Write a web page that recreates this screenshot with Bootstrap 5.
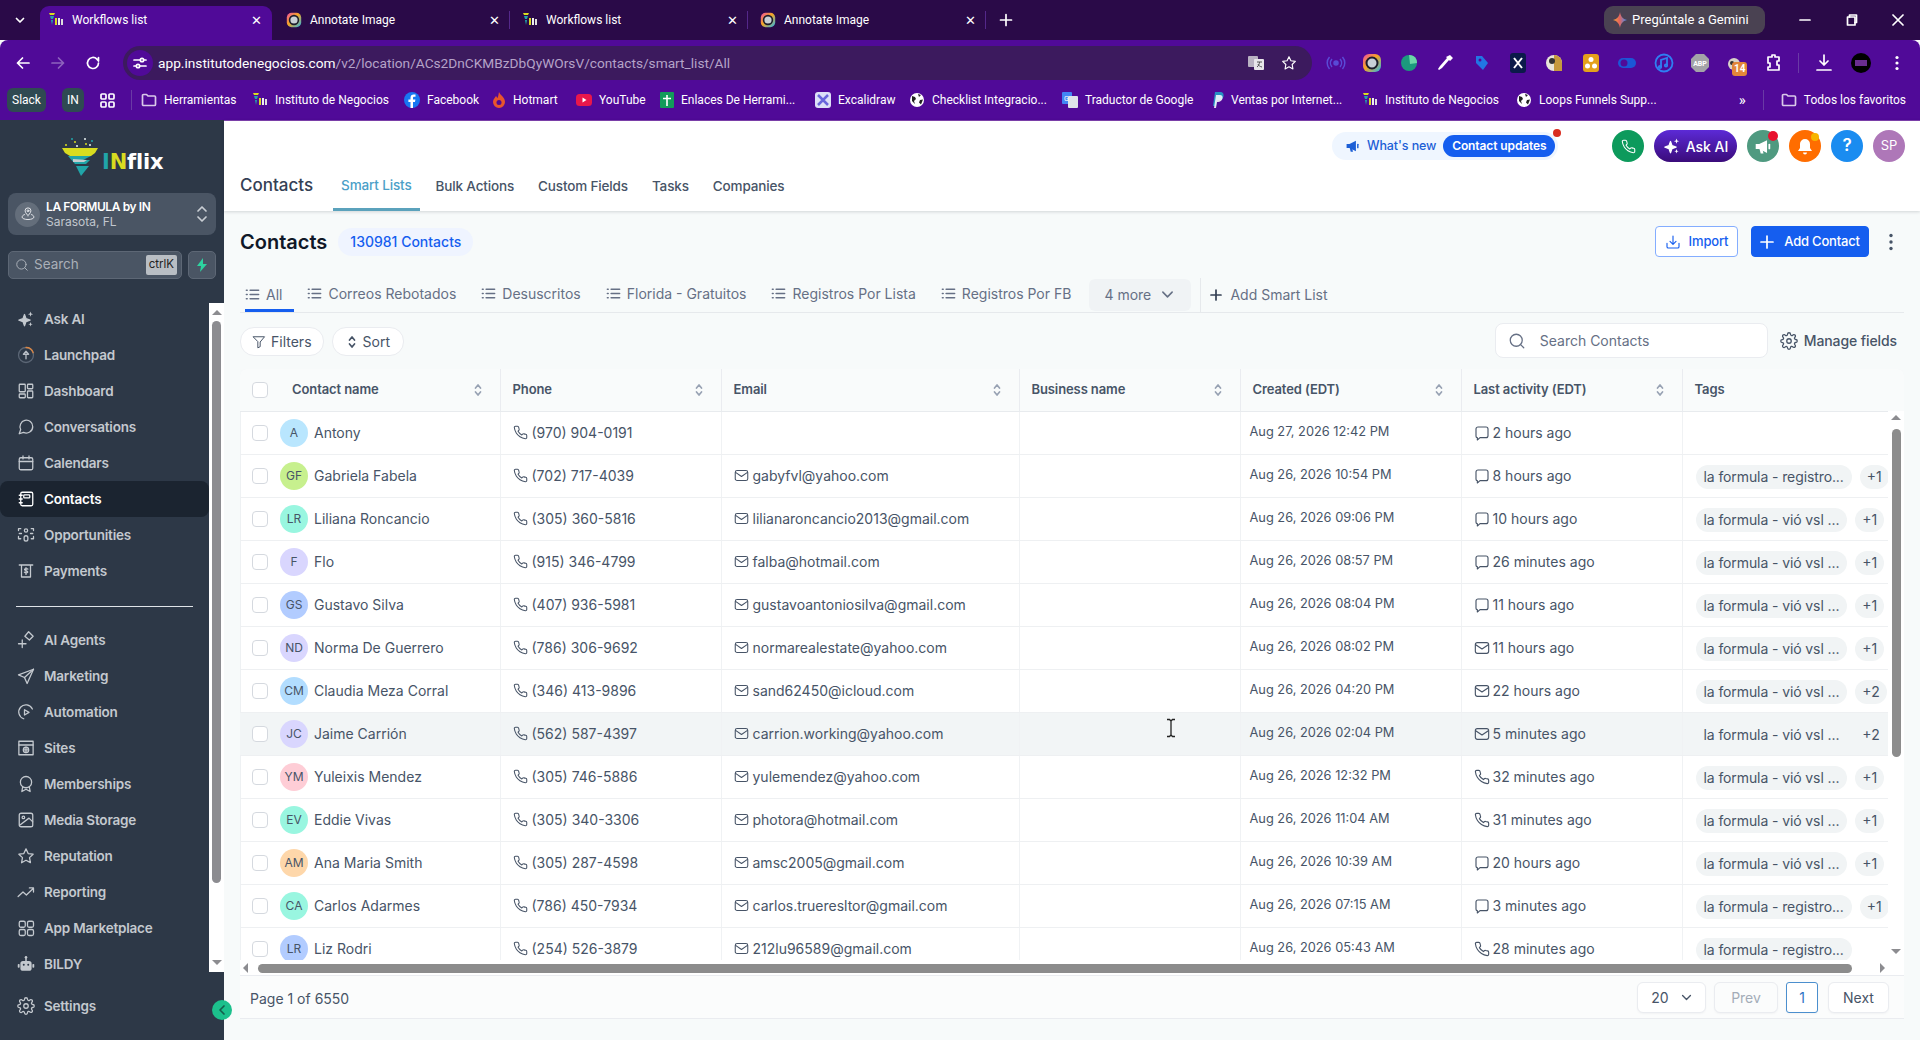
<!DOCTYPE html>
<html lang="en">
<head>
  <meta charset="UTF-8" />
  <meta name="viewport" content="width=device-width, initial-scale=1" />
  <title>Contacts</title>
  <link href="https://cdn.jsdelivr.net/npm/bootstrap@5.3.2/dist/css/bootstrap.min.css" rel="stylesheet" />
  <style>
    html, body { height: 100%; overflow: hidden; }
    body { font-family: Inter, "Liberation Sans", sans-serif; background: #f7fafa; color: #475467; }
    svg.ico { fill: none; stroke: currentColor; stroke-width: 1.7; stroke-linecap: round; stroke-linejoin: round; flex: none; display: block; }
    svg.solid { fill: currentColor; stroke: none; }

    /* browser chrome */
    .chrome { font-family: Roboto, "Liberation Sans", sans-serif; color: #fff; flex: none; }
    .tab-strip { height: 40px; background: #2a0a48; padding-left: 40px; position: relative; }
    .strip-arrow { position: absolute; left: 13px; top: 13px; }
    .br-tab { width: 238px; height: 34px; margin-top: 6px; padding: 0 10px 6px 8px; font-size: 12px; gap: 8px; position: relative; flex: none; }
    .br-tab.on { width: 232px; background: #500a98; border-radius: 9px 9px 0 0; }
    .br-tab .tclose { margin-left: auto; font-size: 13px; line-height: 1; }
    .br-tab .tsep { position: absolute; right: 0; top: 5px; height: 18px; width: 1px; background: #54288a; }
    .new-tab { margin-left: 13px; }
    .gemini { position: absolute; left: 1604px; top: 6px; width: 161px; height: 28px; background: #4a4252; border-radius: 9px; font-size: 13px; padding-left: 9px; gap: 5px; }
    .win-ctl { position: absolute; top: 12px; right: 0; width: 145px; height: 16px; }
    .toolbar { height: 45px; background: #500a98; border-radius: 8px 8px 0 0; padding: 6px 0 5px 0; }
    .nav-btns { width: 123px; flex: none; padding-left: 15px; gap: 19px; }
    .omnibox { width: 1189px; height: 34px; background: #3c1a5e; border-radius: 17px; padding: 0 15px 0 4px; font-size: 13.7px; flex: none; }
    .site-ico { width: 26px; height: 26px; border-radius: 50%; background: #500a98; margin-right: 5px; }
    .url-rest { color: #b5a3c8; }
    .ext-row { margin-left: 14px; gap: 16.4px; flex: none; }
    .ext-box { width: 20px; height: 20px; flex: none; position: relative; }
    .ext-count { position: absolute; left: 6px; top: 9px; background: #e2863a; color: #fff; font-size: 10px; font-weight: 700; line-height: 14px; width: 15px; text-align: center; border-radius: 3px; }
    .bookmarks { height: 35px; background: #500a98; padding: 0 0 5px 7px; font-size: 12px; position: relative; }
    .bm-pill { height: 24px; background: #2f4a52; border-radius: 6px; padding: 0 5px; font-size: 12px; }
    .bm-sep { width: 1px; height: 20px; background: #6a3aa5; }
    .bm-item { gap: 7px; white-space: nowrap; flex: none; }
    .bm-right { position: absolute; right: 14px; top: 3px; height: 24px; gap: 17px; }

    /* sidebar */
    .side-bar { width: 224px; flex: none; background: #2d3847; position: relative; color: #c9ced4; }
    .logo-wrap { height: 73px; padding: 17px 0 0 62px; }
    .logo-text { font-family: "DejaVu Sans", sans-serif; font-weight: 700; font-size: 21px; line-height: 1; margin: 15px 0 0 4px; letter-spacing: -.2px; color: #fff; }
    .loc-switch { margin: 0 8px; height: 42px; background: #4a5564; border-radius: 8px; padding: 0 8px 0 7px; gap: 6px; }
    .loc-ico { width: 25px; height: 25px; border-radius: 50%; background: #646e7b; color: #e5e7eb; }
    .loc-name { font-size: 12px; font-weight: 600; color: #fff; line-height: 15px; letter-spacing: -.4px; }
    .loc-city { font-size: 12px; color: #c2c7ce; line-height: 15px; }
    .side-search { margin: 16px 8px 0; gap: 6px; height: 28px; }
    .search-in { flex: 1; background: #4a5564; border: 1px solid #5d6775; border-radius: 5px; padding: 0 4px 0 6px; font-size: 13.5px; color: #aab0b8; gap: 5px; }
    .search-in .s-word { padding-bottom: 2px; }
    .search-in kbd { margin-left: auto; background: #b9bec4; color: #222; font-family: Inter, sans-serif; font-size: 11.5px; padding: 1px 3px; border-radius: 2px; box-shadow: none; }
    .bolt-btn { width: 28px; background: #4a5564; border: 1px solid #5d6775; border-radius: 5px; color: #2dd4a0; }
    .side-nav { margin-top: 22px; width: 209px; }
    .side-item { height: 36px; padding-left: 17px; gap: 9px; font-size: 13.5px; font-weight: 600; color: #c4c9cf; letter-spacing: -.2px; border-radius: 8px; }
    .side-item.on { background: #1b2430; color: #fff; }
    .side-rule { height: 1px; background: #dfe3e8; margin: 17px 16px 15px; }
    .side-track { position: absolute; left: 209px; top: 183px; width: 15px; height: 669px; background: #fff; }
    .side-thumb { position: absolute; left: 3px; top: 18px; width: 9px; height: 562px; background: #8c8c90; border-radius: 5px; }
    .arrow-up { width: 0; height: 0; border: 5px solid transparent; border-top: 0; border-bottom: 5px solid #8c8c90; position: absolute; }
    .arrow-dn { width: 0; height: 0; border: 5px solid transparent; border-bottom: 0; border-top: 5px solid #8c8c90; position: absolute; }
    .arrow-lf { width: 0; height: 0; border: 5px solid transparent; border-left: 0; border-right: 5px solid #8c8c90; position: absolute; }
    .arrow-rt { width: 0; height: 0; border: 5px solid transparent; border-right: 0; border-left: 5px solid #8c8c90; position: absolute; }
    .side-settings { position: absolute; left: 0; top: 868px; }
    .collapse-btn { position: absolute; left: 212px; top: 880px; width: 20px; height: 20px; border-radius: 50%; background: #1cc08c; color: #155e4b; z-index: 5; }

    /* page header */
    .page-col { flex: 1; min-width: 0; }
    .top-head { height: 91px; background: #fff; border-top: 1px solid #7a3fa8; box-shadow: 0 1px 3px rgba(16,24,40,.16); position: relative; padding-left: 16px; }
    .top-title { font-size: 17px; font-weight: 500; color: #344054; line-height: 22px; margin-top: 53px; margin-right: 20px; }
    .head-tabs { position: absolute; left: 16px; top: 0; height: 89px; }
    .head-tab { font-size: 13.5px; font-weight: 500; color: #475467; margin-top: 54px; height: 36px; padding: 1px 12px 0; letter-spacing: -.15px; flex: none; line-height: 20px; }
    .head-tab.on { color: #4b9fc8; border-bottom: 3px solid #5ba2bc; padding-top: 0; padding-left: 8px; padding-right: 8px; margin-right: 4px; }
    .head-right { position: absolute; right: 15px; top: 9px; height: 32px; gap: 10px; }
    .new-pill { width: 226px; height: 28px; background: #eff6ff; border-radius: 14px; margin-right: 44px; padding: 0 3px 0 14px; gap: 7px; font-size: 12.5px; font-weight: 500; color: #1d5fd6; position: relative; letter-spacing: -.1px; white-space: nowrap; flex: none; }
    .new-inner { margin-left: auto; width: 112px; height: 22px; background: #155eef; color: #fff; border-radius: 11px; font-size: 12px; font-weight: 600; text-align: center; line-height: 22px; flex: none; }
    .new-dot { position: absolute; right: -3px; top: -3px; width: 8px; height: 8px; border-radius: 50%; background: #d92d20; }
    .round-btn { width: 32px; height: 32px; border-radius: 50%; color: #fff; position: relative; font-weight: 600; font-size: 14px; flex: none; }
    .ai-btn { width: 83px; height: 32px; border-radius: 16px; background: linear-gradient(180deg,#5c2ad6,#3a0b7a); color: #fff; font-size: 14px; font-weight: 500; gap: 5px; }

    /* contact area */
    .content-wrap { padding: 15px 16px 0; }
    .title-row { height: 31px; }
    .page-title { font-size: 20px; font-weight: 600; color: #101828; line-height: 28px; margin: 0; }
    .count-badge { height: 28px; line-height: 28px; padding: 0 12px; margin-left: 11px; background: #eff4ff; color: #155eef; font-size: 14px; font-weight: 500; border-radius: 14px; }
    .btn-import { width: 83px; height: 31px; background: #fff; border: 1px solid #84adff; color: #155eef; font-size: 13px; font-weight: 500; border-radius: 4px; gap: 8px; padding: 1px 0 0; letter-spacing: -.15px; }
    .btn-add { width: 118px; height: 31px; background: #155eef; border: 1px solid #155eef; color: #fff; font-size: 13px; font-weight: 500; border-radius: 4px; gap: 10px; padding: 1px 0 0; margin-left: 13px; letter-spacing: -.2px; }
    .kebab { color: #475467; margin: 0 11px 0 20px; }
    .list-tabs { height: 36px; margin: 20px 0 0; border-bottom: 1px solid #e6e9ec; padding-left: 5px; position: relative; }
    .list-tab { font-size: 14px; color: #667085; height: 36px; gap: 6px; margin-right: 25px; padding-bottom: 2px; flex: none; }
    .list-tab.on { border-bottom: 3px solid #155eef; height: 35px; padding: 2px 12px 0 0; margin-right: 13px; color: #667085; }
    .more-box { width: 102px; height: 32px; background: #f0f3f5; border-radius: 6px; margin: 0 9px 0 -7px; font-size: 14px; color: #667085; padding-left: 15px; gap: 10px; flex: none; }
    .add-list { border-left: 1px solid #e6e9ec; height: 34px; padding-left: 9px; gap: 8px; font-size: 14px; color: #667085; }
    .tool-row { height: 35px; margin-top: 10px; }
    .pill-btn { height: 29px; background: #fff; border: 1px solid #eaecf0; border-radius: 14px; padding: 0 11px; font-size: 14px; color: #475467; gap: 5px; margin-top: 4px; }
    .sort-pill { padding: 0 13px; }
    .search-box { width: 273px; height: 35px; background: #fff; border: 1px solid #eaecf0; border-radius: 8px; padding: 0 12px; gap: 14px; font-size: 14px; color: #667085; }
    .manage-link { font-size: 14px; font-weight: 500; color: #475467; gap: 6px; margin: 0 7px 0 12px; letter-spacing: -.1px; }

    /* table */
    .table-shell { margin-top: 11px; width: 1664px; height: 650px; background: #fff; border: 0; border-radius: 6px 6px 0 0; position: relative; overflow: hidden; box-shadow: inset 0 0 0 1px #eef1f3; }
    .table-clip { height: 591px; overflow: hidden; }
    .contacts-tbl { table-layout: fixed; width: 1664px; margin: 0; --bs-table-bg: transparent; font-size: 14px; }
    .contacts-tbl th, .contacts-tbl td { padding: 0 12px; vertical-align: middle; border-right: 1px solid #f0f2f4; border-bottom: 1px solid #eef0f2; white-space: nowrap; color: #475467; font-weight: 400; }
    .contacts-tbl th { height: 42px; background: #f9fbfb; font-size: 13px; font-weight: 600; color: #475467; border-right-color: #eaecf0; border-bottom-color: #e8ebee; letter-spacing: -.1px; }
    .contacts-tbl td { height: 43px; }
    .contacts-tbl tr.hov td { background: #f2f5f6; }
    .check-box { width: 16px; height: 16px; border: 1px solid #d5d9df; border-radius: 4px; background: #fff; flex: none; }
    .sort-ico { color: #98a2b3; margin-left: auto; margin-right: 5px; }
    .avatar { width: 28px; height: 28px; border-radius: 50%; font-size: 12px; color: #475467; flex: none; }
    .name-text { margin-left: 6px; }
    .cell-ico { color: #475467; }
    .created-cell { font-size: 12.8px; padding: 0 12px 2px 9px !important; }
    .tag-pill { height: 24px; line-height: 24px; background: #f1f4f5; border-radius: 12px; padding: 0 8px; font-size: 14px; color: #475467; letter-spacing: -.1px; flex: none; }
    .hov .tag-pill, .hov .plus-pill { background: transparent; }
    .plus-pill { height: 24px; line-height: 24px; background: #f1f4f5; border-radius: 12px; padding: 0 7px; font-size: 14px; color: #475467; flex: none; }
    .tag-wrap { margin: 2px 0 0 1px; gap: 8px; }
    .vert-track { position: absolute; left: 1648px; top: 42px; width: 16px; height: 549px; background: #fff; }
    .vert-thumb { position: absolute; left: 4px; top: 18px; width: 9px; height: 328px; background: #8c8c8c; border-radius: 5px; }
    .horiz-track { height: 15px; background: #fff; position: relative; }
    .horiz-thumb { position: absolute; left: 18px; top: 4px; width: 1594px; height: 9px; background: #8c8c8c; border-radius: 5px; }
    .foot-bar { height: 44px; background: #fbfcfc; border-top: 1px solid #eaecf0; border-bottom: 1px solid #eaecf0; padding: 2px 15px 0 10px; font-size: 14px; color: #475467; }
    .page-btn { height: 31px; background: #fff; border: 1px solid #eaecf0; border-radius: 6px; font-size: 14px; box-shadow: 0 1px 2px rgba(16,24,40,.04); margin-top: -2px; }
    .mouse-pos { position: absolute; left: 1165px; top: 718px; color: #222; z-index: 6; }
  </style>
</head>
<body>
  <svg width="0" height="0" class="position-absolute">
    <defs>
      <linearGradient id="ring" x1="0" y1="0" x2="1" y2="1"><stop offset="0" stop-color="#f04ea5"/><stop offset=".45" stop-color="#f5a623"/><stop offset="1" stop-color="#27b4e8"/></linearGradient>
      <linearGradient id="gem" x1="0" y1="0" x2="1" y2="0"><stop offset="0" stop-color="#f4a63a"/><stop offset=".45" stop-color="#e8655a"/><stop offset="1" stop-color="#3e8ef7"/></linearGradient>
      <symbol id="i-funnel" viewBox="0 0 16 16"><path d="M1 1h6l-1 2H2z" fill="#d8dc20"/><path d="M2 4h4l-1 3H3z" fill="#20a5a9"/><path d="M3 8h2l-1 5z" fill="#20a5a9"/><rect x="7" y="6" width="2" height="7" fill="#d8dc20"/><rect x="10" y="6" width="2" height="7" fill="#eee"/><rect x="13" y="7" width="2" height="6" fill="#ddd"/></symbol>
      <symbol id="i-annot" viewBox="0 0 20 20"><rect x="1" y="1" width="18" height="18" rx="6" fill="url(#ring)"/><circle cx="10" cy="10" r="5.5" fill="#c9d0d6" stroke="#1d1d2b" stroke-width="2"/></symbol>
      <symbol id="i-list" viewBox="0 0 16 16"><path d="M5.500 3.500h9M5.500 8h9M5.500 12.500h9M1.500 3.500h.8M1.500 8h.8M1.500 12.500h.8"/></symbol>
      <symbol id="i-phone" viewBox="0 0 24 24"><path d="M22 16.900v3a2 2 0 0 1-2.200 2 19.800 19.800 0 0 1-8.600-3.100 19.500 19.500 0 0 1-6-6A19.800 19.800 0 0 1 2.100 4.100 2 2 0 0 1 4.100 2h3a2 2 0 0 1 2 1.700c.1 1 .4 1.900.7 2.800a2 2 0 0 1-.5 2.100L8.100 9.900a16 16 0 0 0 6 6l1.300-1.300a2 2 0 0 1 2.100-.4c.9.3 1.800.6 2.800.7a2 2 0 0 1 1.700 2z"/></symbol>
      <symbol id="i-mail" viewBox="0 0 24 24"><rect x="2" y="4" width="20" height="16" rx="3"/><path d="M2.500 7l9.500 6.500L21.500 7"/></symbol>
      <symbol id="i-chat" viewBox="0 0 24 24"><path d="M3 6a3 3 0 0 1 3-3h12a3 3 0 0 1 3 3v10a3 3 0 0 1-3 3H9l-4 3.500V19a2 2 0 0 1-2-2z"/></symbol>
      <symbol id="i-sort" viewBox="0 0 10 16"><path d="M2.500 6L5 3l2.500 3M2.500 10L5 13l2.500-3"/></symbol>
      <symbol id="i-search" viewBox="0 0 24 24"><circle cx="11" cy="11" r="8"/><path d="M21 21l-4.500-4.500"/></symbol>
      <symbol id="i-gear" viewBox="0 0 24 24"><circle cx="12" cy="12" r="3"/><path d="M19.400 15a1.700 1.700 0 0 0 .3 1.800l.1.1a2 2 0 1 1-2.800 2.800l-.1-.1a1.700 1.700 0 0 0-2.900 1.200v.2a2 2 0 0 1-4 0V21a1.700 1.700 0 0 0-2.900-1.200l-.1.1a2 2 0 1 1-2.800-2.800l.1-.1a1.700 1.700 0 0 0-1.200-2.900H3a2 2 0 0 1 0-4h.1a1.700 1.700 0 0 0 1.200-2.900l-.1-.1a2 2 0 1 1 2.800-2.800l.1.1a1.700 1.700 0 0 0 1.900.3H9a1.700 1.700 0 0 0 1-1.500V3a2 2 0 0 1 4 0v.1a1.700 1.700 0 0 0 2.900 1.200l.1-.1a2 2 0 1 1 2.800 2.800l-.1.1a1.700 1.700 0 0 0-.3 1.900V9a1.700 1.700 0 0 0 1.500 1H21a2 2 0 0 1 0 4h-.1a1.700 1.700 0 0 0-1.500 1z"/></symbol>
      <symbol id="i-spark" viewBox="0 0 24 24"><path d="M10 6l2 5.500 5.500 2-5.500 2-2 5.500-2-5.500-5.500-2 5.500-2z" fill="currentColor"/><path d="M18 2l.9 2.600 2.600.9-2.600.9L18 9l-.9-2.600-2.600-.9 2.600-.9zM18 16l.8 2.200 2.200.8-2.200.8L18 22l-.8-2.200-2.200-.8 2.200-.8z" fill="currentColor" stroke="none"/></symbol>
      <symbol id="i-launch" viewBox="0 0 24 24"><circle cx="12" cy="12" r="10" stroke="#5b6675"/><path d="M12 2a10 10 0 0 1 9.600 7" stroke="#d98645"/><path d="M12 17v-6H8.500L12 7l3.500 4H12" stroke="#b8bec6"/></symbol>
      <symbol id="i-dash" viewBox="0 0 24 24"><rect x="3" y="3" width="8" height="10" rx="1"/><rect x="14" y="3" width="7" height="6" rx="1"/><rect x="3" y="16" width="8" height="5" rx="1"/><rect x="14" y="12" width="7" height="9" rx="1"/></symbol>
      <symbol id="i-bubble" viewBox="0 0 24 24"><path d="M21 11.500a8.500 8.500 0 0 1-12.300 7.600L3 21l1.900-5.700A8.500 8.500 0 1 1 21 11.500z"/></symbol>
      <symbol id="i-cal" viewBox="0 0 24 24"><rect x="3" y="5" width="18" height="16" rx="2"/><path d="M3 10h18M8 2.500v4M16 2.500v4"/></symbol>
      <symbol id="i-book" viewBox="0 0 24 24"><rect x="5" y="3" width="16" height="18" rx="2"/><rect x="9" y="6.500" width="8" height="4" rx="1"/><path d="M3 7h4M3 12h4M3 17h4"/></symbol>
      <symbol id="i-opp" viewBox="0 0 24 24"><circle cx="12" cy="6" r="2.200"/><rect x="9.500" y="13" width="5" height="7" rx="2.500"/><path d="M2 6V3.500h3M22 6V3.500h-3M2 14v3h3M22 14v3h-3M3 10h3M18 10h3"/></symbol>
      <symbol id="i-pay" viewBox="0 0 24 24"><path d="M3 4h18M6 4v16h12V4"/><path d="M14.500 9.500c-.5-1-3.700-1.200-4.400.3-.6 1.600 4.300 1.500 4.300 3.400 0 1.500-3.500 1.500-4.600.3M12 7.500v9"/></symbol>
      <symbol id="i-agent" viewBox="0 0 24 24"><path d="M2 17h10M7 12v10"/><path d="M16 2l6 6-5 5-6-5z" transform="translate(-.5 -1)"/></symbol>
      <symbol id="i-plane" viewBox="0 0 24 24"><path d="M22 3L2 10.500l8 3.500 3.500 8z"/><path d="M22 3L10 14"/></symbol>
      <symbol id="i-auto" viewBox="0 0 24 24"><path d="M20.500 8A9.500 9.500 0 1 0 9 21"/><path d="M10 9l6 3.500-6 3.500z"/></symbol>
      <symbol id="i-site" viewBox="0 0 24 24"><rect x="2.500" y="3" width="19" height="18"/><path d="M2.500 8h19"/><circle cx="12" cy="14.500" r="3.500"/><path d="M8.500 14.500h7M12 11v7"/></symbol>
      <symbol id="i-medal" viewBox="0 0 24 24"><circle cx="12" cy="9.500" r="7.500"/><path d="M7.500 16l-1 6 5.500-3 5.500 3-1-6"/></symbol>
      <symbol id="i-image" viewBox="0 0 24 24"><rect x="3" y="3" width="18" height="18" rx="2.500"/><circle cx="8.500" cy="8.500" r="1.700"/><path d="M3.500 19L16 9.500l5 5"/></symbol>
      <symbol id="i-star" viewBox="0 0 24 24"><path d="M12 2.500l2.900 6.200 6.600.9-4.800 4.600 1.200 6.700L12 17.700 6.100 21l1.200-6.800L2.500 9.600l6.600-.9z"/></symbol>
      <symbol id="i-trend" viewBox="0 0 24 24"><path d="M1.500 18l6.500-6 4.500 4 9.500-9M16.500 6.500H22V12"/></symbol>
      <symbol id="i-apps" viewBox="0 0 24 24"><rect x="3" y="3" width="8" height="8" rx="2"/><rect x="14" y="3" width="8" height="8" rx="2"/><rect x="3" y="14" width="8" height="8" rx="2"/><rect x="14" y="14" width="8" height="8" rx="2"/></symbol>
      <symbol id="i-robot" viewBox="0 0 24 24"><rect x="4.500" y="8" width="15" height="13" rx="3.500" fill="currentColor" stroke="none"/><rect x="11" y="3" width="2" height="5" fill="currentColor" stroke="none"/><circle cx="12" cy="3" r="1.700" fill="currentColor" stroke="none"/><rect x="1" y="12" width="2.500" height="5" rx="1" fill="currentColor" stroke="none"/><rect x="20.500" y="12" width="2.500" height="5" rx="1" fill="currentColor" stroke="none"/><circle cx="9" cy="13" r="1.300" fill="#2d3847" stroke="none"/><circle cx="15" cy="13" r="1.300" fill="#2d3847" stroke="none"/></symbol>
      <symbol id="i-folder" viewBox="0 0 16 16"><path d="M1.500 3.500a1 1 0 0 1 1-1h3l1.500 1.500h6.500a1 1 0 0 1 1 1v7.500a1 1 0 0 1-1 1h-11a1 1 0 0 1-1-1z"/></symbol>
      <symbol id="i-globe" viewBox="0 0 16 16"><circle cx="8" cy="8" r="7" fill="#fff"/><path d="M3 4l3 1 1 2-2 2 1 3-3-3zM9 2l3 1-2 2zM11 8l3-.5-2 5-2-2z" fill="#222"/></symbol>
      <symbol id="i-megaphone" viewBox="0 0 24 24"><path d="M1 8.500h5L17 3v18L6 15.500H1z"/><path d="M6.500 15.500h4l1.500 6.500H8z"/><rect x="19" y="8" width="2.500" height="8" rx="1.200"/></symbol>
    </defs>
  </svg>

  <div class="d-flex flex-column vh-100">
    <header class="chrome">
      <div class="tab-strip d-flex">
        <svg class="ico strip-arrow" width="14" height="14" viewBox="0 0 14 14" stroke-width="2"><path d="M3.500 5.500L7 9l3.500-3.500"/></svg>
        <div class="br-tab on d-flex align-items-center"><svg width="16" height="16"><use href="#i-funnel"/></svg><span>Workflows list</span><span class="tclose">✕</span></div>
        <div class="br-tab d-flex align-items-center" style="padding-left:14px"><svg width="16" height="16"><use href="#i-annot"/></svg><span>Annotate Image</span><span class="tclose">✕</span><span class="tsep"></span></div>
        <div class="br-tab d-flex align-items-center" style="padding-left:12px"><svg width="16" height="16"><use href="#i-funnel"/></svg><span>Workflows list</span><span class="tclose">✕</span><span class="tsep"></span></div>
        <div class="br-tab d-flex align-items-center" style="padding-left:12px"><svg width="16" height="16"><use href="#i-annot"/></svg><span>Annotate Image</span><span class="tclose">✕</span><span class="tsep"></span></div>
        <div class="new-tab d-flex align-items-center"><svg class="ico" width="14" height="14" viewBox="0 0 14 14"><path d="M7 1.500v11M1.500 7h11"/></svg></div>
        <div class="gemini d-flex align-items-center"><svg width="14" height="16" viewBox="0 0 14 16"><path d="M7 0c.6 4 2.500 7 7 8-4.500 1-6.400 4-7 8-.6-4-2.500-7-7-8 4.500-1 6.400-4 7-8z" fill="url(#gem)"/></svg><span>Pregúntale a Gemini</span></div>
        <div class="win-ctl d-flex align-items-center justify-content-between pe-3 ps-4">
          <svg class="ico" width="12" height="12" viewBox="0 0 12 12" stroke-width="1.200"><path d="M1 6h10"/></svg>
          <svg class="ico" width="12" height="12" viewBox="0 0 12 12" stroke-width="1.200"><path d="M3.500 3V1h7v7.500H9"/><rect x="1.500" y="3" width="7.500" height="8"/></svg>
          <svg class="ico" width="12" height="12" viewBox="0 0 12 12" stroke-width="1.200"><path d="M1 1l10 10M11 1L1 11"/></svg>
        </div>
      </div>
      <div class="toolbar d-flex align-items-center">
        <div class="nav-btns d-flex align-items-center">
          <svg class="ico" width="16" height="16" viewBox="0 0 16 16"><path d="M14 8H2.500M7.500 3l-5 5 5 5"/></svg>
          <svg class="ico" width="16" height="16" viewBox="0 0 16 16" style="color:#8d63bd"><path d="M2 8h11.500M8.500 3l5 5-5 5"/></svg>
          <svg class="ico" width="16" height="16" viewBox="0 0 16 16"><path d="M13.500 8a5.500 5.500 0 1 1-1.600-3.900L13.500 6V2.500"/></svg>
        </div>
        <div class="omnibox d-flex align-items-center">
          <div class="site-ico d-flex align-items-center justify-content-center"><svg class="ico" width="14" height="14" viewBox="0 0 14 14" stroke-width="1.200"><path d="M1 4h6M11 4h2M1 10h2M7 10h6"/><circle cx="9" cy="4" r="1.700"/><circle cx="5" cy="10" r="1.700"/></svg></div>
          <span>app.institutodenegocios.com<span class="url-rest">/v2/location/ACs2DnCKMBzDbQyWOrsV/contacts/smart_list/All</span></span>
          <svg width="18" height="18" viewBox="0 0 18 18" class="ms-auto"><rect x="1" y="2" width="10" height="11" rx="1" fill="#b9b2c2"/><rect x="7" y="5" width="10" height="11" rx="1" fill="#e8e6ea"/><path d="M10 8h5M12.500 8c0 2-1 4-2.500 5M11 10c.5 1.500 2 2.500 4 3" stroke="#555" fill="none"/></svg>
          <svg class="ico ms-3" width="16" height="16" viewBox="0 0 24 24"><path d="M12 2.500l2.900 6.200 6.600.9-4.800 4.600 1.200 6.700L12 17.700 6.100 21l1.200-6.800L2.500 9.600l6.600-.9z"/></svg>
        </div>
        <div class="ext-row d-flex align-items-center">
          <svg class="ext-box" viewBox="0 0 20 20" fill="none" stroke="#5a4bd6" stroke-width="1.500"><circle cx="10" cy="10" r="2" fill="#5a4bd6"/><path d="M6 6a6 6 0 0 0 0 8M14 6a6 6 0 0 1 0 8M3.500 4a9 9 0 0 0 0 12M16.500 4a9 9 0 0 1 0 12"/></svg>
          <svg class="ext-box"><use href="#i-annot"/></svg>
          <svg class="ext-box" viewBox="0 0 20 20"><circle cx="10" cy="10" r="8" fill="#1c9a7d"/><path d="M10 2c6 0 8 4 8 8l-7 1z" fill="#6bd6a8"/></svg>
          <svg class="ext-box" viewBox="0 0 20 20"><path d="M15 2l3 3-3 3-1-1-7 8-3 2-1-1 2-3 7-8-1-1z" fill="#fff"/></svg>
          <svg class="ext-box" viewBox="0 0 20 20"><path d="M4 3h6l6 7-5 7-7-7z" fill="#2276e3"/><circle cx="8" cy="7" r="1.500" fill="#500a98"/></svg>
          <div class="ext-box d-flex align-items-center justify-content-center"><svg width="16" height="20" viewBox="0 0 16 20"><rect width="16" height="20" rx="3" fill="#0b1a4a"/><path d="M4 5l8 10M12 5L4 15" stroke="#fff" stroke-width="2"/></svg></div>
          <svg class="ext-box" viewBox="0 0 20 20"><circle cx="10" cy="10" r="8" fill="#e9e6da"/><path d="M10 2a8 8 0 0 1 8 8v8h-8z" fill="#c69a3d"/><circle cx="8" cy="8" r="3" fill="#333"/></svg>
          <svg class="ext-box" viewBox="0 0 20 20"><rect x="2" y="1" width="16" height="18" rx="3" fill="#e4a11b"/><circle cx="10" cy="6.500" r="2.500" fill="#fff"/><circle cx="6.500" cy="13" r="2.500" fill="#fff"/><circle cx="13.500" cy="13" r="2.500" fill="#fff"/></svg>
          <svg class="ext-box" viewBox="0 0 20 20"><rect x="1" y="5" width="18" height="10" rx="5" fill="#1c56d6"/><circle cx="7" cy="10" r="3.500" fill="#500a98"/></svg>
          <svg class="ext-box" viewBox="0 0 20 20" fill="none" stroke="#2f7ef2" stroke-width="1.800"><circle cx="10" cy="10" r="8.500"/><path d="M7 14V7l6-2v7"/><circle cx="6" cy="14" r="1.200"/><circle cx="12" cy="12.500" r="1.200"/></svg>
          <svg class="ext-box" viewBox="0 0 20 20"><path d="M6 1h8l5 5v8l-5 5H6l-5-5V6z" fill="#a3a3a8"/><text x="10" y="13" font-size="7" font-weight="700" text-anchor="middle" fill="#fff" font-family="Roboto, sans-serif">ABP</text></svg>
          <div class="ext-box"><svg width="18" height="18" viewBox="0 0 18 18"><circle cx="8" cy="7" r="6" fill="#d8d3c8"/><circle cx="6" cy="6" r="2" fill="#333"/></svg><span class="ext-count">14</span></div>
          <svg class="ico ext-box" viewBox="0 0 20 20"><path d="M5 4h4V2h3v2h4v4h-2v4h2v5H5v-3h2v-4H5z"/></svg>
          <span class="bm-sep" style="margin-left:-1px;margin-right:-1px"></span>
          <svg class="ico ext-box" viewBox="0 0 20 20" stroke-width="1.800"><path d="M10 2v10M6 8l4 4 4-4M3 17h14"/></svg>
          <div class="ext-box rounded-circle bg-black d-flex align-items-center justify-content-center"><svg width="12" height="6" viewBox="0 0 12 6"><rect width="12" height="6" fill="#6a2d8f"/></svg></div>
          <svg class="ext-box" viewBox="0 0 20 20" fill="#fff"><circle cx="10" cy="4.500" r="1.600"/><circle cx="10" cy="10" r="1.600"/><circle cx="10" cy="15.500" r="1.600"/></svg>
        </div>
      </div>
      <div class="bookmarks d-flex align-items-center" id="bookmarkBar"></div>
    </header>

    <div class="d-flex flex-grow-1" style="min-height:0">
      <aside class="side-bar d-flex flex-column flex-none">
        <div class="logo-wrap d-flex">
          <svg width="36" height="40" viewBox="0 0 36 40">
            <g fill="#d8dc20"><circle cx="4" cy="8" r="1"/><circle cx="13" cy="5" r="1"/><circle cx="24" cy="7" r="1"/></g>
            <g fill="#eaf2f2"><circle cx="15" cy="9" r="1"/><circle cx="23" cy="2" r="1"/><circle cx="28" cy="8" r="1"/></g>
            <circle cx="10" cy="2" r="1" fill="#20a5a9"/><circle cx="30" cy="4" r="1" fill="#20a5a9"/>
            <path d="M0 11h36l-3 5-4 3H8l-5-3z" fill="#d8dc20"/>
            <path d="M6 19h23l-8 4 7 0-4 4H13z" fill="#20a5a9"/>
            <path d="M11 22l14 1-3 2H11z" fill="#c5cdd0"/>
            <path d="M14 29h13l-8 10z" fill="#20a5a9"/>
          </svg>
          <div class="logo-text"><span style="color:#20a5a9">I</span><span style="color:#d8dc20">N</span>flix</div>
        </div>
        <div class="loc-switch d-flex align-items-center">
          <div class="loc-ico d-flex align-items-center justify-content-center"><svg class="ico" width="14" height="14" viewBox="0 0 24 24" stroke-width="2"><path d="M12 14.500s5-4 5-8a5 5 0 0 0-10 0c0 4 5 8 5 8z"/><circle cx="12" cy="6.500" r="1.600"/><path d="M6 13c-3 1-4 2.500-4 4.500 0 2 4 4 10 4s10-2 10-4c0-2-1-3.500-4-4.500"/></svg></div>
          <div class="flex-grow-1"><div class="loc-name">LA FORMULA by IN</div><div class="loc-city">Sarasota, FL</div></div>
          <svg class="ico" width="12" height="22" viewBox="0 0 12 22" stroke-width="1.500"><path d="M2 8l4-4 4 4M2 14l4 4 4-4"/></svg>
        </div>
        <div class="side-search d-flex">
          <div class="search-in d-flex align-items-center"><svg class="ico" width="14" height="14"><use href="#i-search"/></svg><span class="s-word">Search</span><kbd>ctrlK</kbd></div>
          <div class="bolt-btn d-flex align-items-center justify-content-center"><svg class="ico solid" width="12" height="14" viewBox="0 0 12 14"><path d="M7 0L1 8h4l-1 6 7-8H7z"/></svg></div>
        </div>
        <nav class="side-nav">
          <div class="side-item d-flex align-items-center"><svg class="ico" width="18" height="18"><use href="#i-spark"/></svg>Ask AI</div>
          <div class="side-item d-flex align-items-center"><svg class="ico" width="18" height="18"><use href="#i-launch"/></svg>Launchpad</div>
          <div class="side-item d-flex align-items-center"><svg class="ico" width="18" height="18"><use href="#i-dash"/></svg>Dashboard</div>
          <div class="side-item d-flex align-items-center"><svg class="ico" width="18" height="18"><use href="#i-bubble"/></svg>Conversations</div>
          <div class="side-item d-flex align-items-center"><svg class="ico" width="18" height="18"><use href="#i-cal"/></svg>Calendars</div>
          <div class="side-item on d-flex align-items-center"><svg class="ico" width="18" height="18"><use href="#i-book"/></svg>Contacts</div>
          <div class="side-item d-flex align-items-center"><svg class="ico" width="18" height="18"><use href="#i-opp"/></svg>Opportunities</div>
          <div class="side-item d-flex align-items-center"><svg class="ico" width="18" height="18"><use href="#i-pay"/></svg>Payments</div>
          <div class="side-rule"></div>
          <div class="side-item d-flex align-items-center"><svg class="ico" width="18" height="18"><use href="#i-agent"/></svg>AI Agents</div>
          <div class="side-item d-flex align-items-center"><svg class="ico" width="18" height="18"><use href="#i-plane"/></svg>Marketing</div>
          <div class="side-item d-flex align-items-center"><svg class="ico" width="18" height="18"><use href="#i-auto"/></svg>Automation</div>
          <div class="side-item d-flex align-items-center"><svg class="ico" width="18" height="18"><use href="#i-site"/></svg>Sites</div>
          <div class="side-item d-flex align-items-center"><svg class="ico" width="18" height="18"><use href="#i-medal"/></svg>Memberships</div>
          <div class="side-item d-flex align-items-center"><svg class="ico" width="18" height="18"><use href="#i-image"/></svg>Media Storage</div>
          <div class="side-item d-flex align-items-center"><svg class="ico" width="18" height="18"><use href="#i-star"/></svg>Reputation</div>
          <div class="side-item d-flex align-items-center"><svg class="ico" width="18" height="18"><use href="#i-trend"/></svg>Reporting</div>
          <div class="side-item d-flex align-items-center"><svg class="ico" width="18" height="18"><use href="#i-apps"/></svg>App Marketplace</div>
          <div class="side-item d-flex align-items-center"><svg class="ico" width="18" height="18"><use href="#i-robot"/></svg>BILDY</div>
        </nav>
        <div class="side-track"><span class="arrow-up" style="left:3px;top:7px"></span><div class="side-thumb"></div><span class="arrow-dn" style="left:3px;bottom:7px"></span></div>
        <div class="side-item side-settings d-flex align-items-center"><svg class="ico" width="18" height="18"><use href="#i-gear"/></svg>Settings</div>
        <div class="collapse-btn d-flex align-items-center justify-content-center"><svg class="ico" width="10" height="12" viewBox="0 0 10 12" stroke-width="2"><path d="M7 2L3 6l4 4"/></svg></div>
      </aside>

      <main class="page-col d-flex flex-column">
        <div class="top-head flex-none">
          <div class="head-tabs d-flex">
            <div class="top-title align-self-start">Contacts</div>
            <div class="head-tab on">Smart Lists</div>
            <div class="head-tab">Bulk Actions</div>
            <div class="head-tab">Custom Fields</div>
            <div class="head-tab">Tasks</div>
            <div class="head-tab">Companies</div>
          </div>
          <div class="head-right d-flex align-items-center">
            <div class="new-pill d-flex align-items-center">
              <svg class="ico solid" width="14" height="14"><use href="#i-megaphone"/></svg>
              <span>What's new</span><span class="new-inner">Contact updates</span><span class="new-dot"></span>
            </div>
            <div class="round-btn d-flex align-items-center justify-content-center" style="background:#0d9a5c"><svg class="ico" width="15" height="15"><use href="#i-phone"/></svg></div>
            <div class="ai-btn d-flex align-items-center justify-content-center"><svg class="ico" width="18" height="18"><use href="#i-spark"/></svg>Ask AI</div>
            <div class="round-btn d-flex align-items-center justify-content-center" style="background:#4f9a80"><svg class="ico solid" width="17" height="17"><use href="#i-megaphone"/></svg><span class="position-absolute rounded-circle" style="width:10px;height:10px;background:#e8112d;top:1px;right:1px"></span></div>
            <div class="round-btn d-flex align-items-center justify-content-center" style="background:#ff6d00"><svg width="16" height="17" viewBox="0 0 16 17" fill="#fff"><path d="M8 1a5 5 0 0 0-5 5v4l-2 3h14l-2-3V6a5 5 0 0 0-5-5z"/><path d="M6 14.500h4a2 2 0 0 1-4 0z"/></svg><span class="position-absolute rounded-circle" style="width:8px;height:8px;background:#f7b500;top:3px;right:2px"></span></div>
            <div class="round-btn d-flex align-items-center justify-content-center" style="background:#1a8cf0;font-size:17px">?</div>
            <div class="round-btn d-flex align-items-center justify-content-center" style="background:#ae77b8;font-weight:400;font-size:13px">SP</div>
          </div>
        </div>

        <section class="content-wrap">
          <div class="title-row d-flex align-items-center">
            <h1 class="page-title">Contacts</h1>
            <span class="count-badge">130981 Contacts</span>
            <button class="btn-import btn d-flex align-items-center justify-content-center ms-auto"><svg class="ico" width="16" height="16" viewBox="0 0 24 24"><path d="M12 3v12M7.500 11l4.500 4.500 4.500-4.500M3 14v5a2 2 0 0 0 2 2h14a2 2 0 0 0 2-2v-5"/></svg>Import</button>
            <button class="btn-add btn d-flex align-items-center justify-content-center"><svg class="ico" width="14" height="14" viewBox="0 0 14 14" stroke-width="1.200"><path d="M7 1v12M1 7h12"/></svg>Add Contact</button>
            <svg class="kebab" width="4" height="18" viewBox="0 0 4 18" fill="currentColor"><circle cx="2" cy="2.500" r="1.700"/><circle cx="2" cy="9" r="1.700"/><circle cx="2" cy="15.500" r="1.700"/></svg>
          </div>

          <div class="list-tabs d-flex align-items-center">
            <div class="list-tab on d-flex align-items-center"><svg class="ico" width="15" height="15" stroke-width="1.300"><use href="#i-list"/></svg>All</div>
            <div class="list-tab d-flex align-items-center"><svg class="ico" width="15" height="15" stroke-width="1.300"><use href="#i-list"/></svg>Correos Rebotados</div>
            <div class="list-tab d-flex align-items-center"><svg class="ico" width="15" height="15" stroke-width="1.300"><use href="#i-list"/></svg>Desuscritos</div>
            <div class="list-tab d-flex align-items-center"><svg class="ico" width="15" height="15" stroke-width="1.300"><use href="#i-list"/></svg>Florida - Gratuitos</div>
            <div class="list-tab d-flex align-items-center"><svg class="ico" width="15" height="15" stroke-width="1.300"><use href="#i-list"/></svg>Registros Por Lista</div>
            <div class="list-tab d-flex align-items-center"><svg class="ico" width="15" height="15" stroke-width="1.300"><use href="#i-list"/></svg>Registros Por FB</div>
            <div class="more-box d-flex align-items-center">4 more <svg class="ico" width="13" height="13" viewBox="0 0 14 14" stroke-width="1.500"><path d="M2 4.500L7 9.500l5-5"/></svg></div>
            <div class="add-list d-flex align-items-center"><svg class="ico" width="12" height="12" viewBox="0 0 12 12" stroke-width="1.700" style="color:#344054"><path d="M6 1v10M1 6h10"/></svg>Add Smart List</div>
          </div>

          <div class="tool-row d-flex align-items-start">
            <div class="pill-btn d-flex align-items-center"><svg class="ico" width="14" height="14" viewBox="0 0 24 24"><path d="M2.500 3h19l-7.500 9v8l-4 2V12z"/></svg>Filters</div>
            <div class="pill-btn sort-pill d-flex align-items-center ms-2"><svg class="ico" width="12" height="16" viewBox="0 0 10 16" stroke-width="1.300"><path d="M2.500 6L5 3l2.500 3M2.500 10L5 13l2.500-3"/></svg>Sort</div>
            <div class="search-box d-flex align-items-center ms-auto"><svg class="ico" width="18" height="18" stroke-width="1.500" style="color:#667085"><use href="#i-search"/></svg>Search Contacts</div>
            <div class="manage-link d-flex align-items-center align-self-center"><svg class="ico" width="18" height="18" stroke-width="1.600"><use href="#i-gear"/></svg>Manage fields</div>
          </div>

          <div class="table-shell">
            <div class="table-clip">
              <table class="table contacts-tbl">
                <colgroup><col style="width:260px"><col style="width:221px"><col style="width:298px"><col style="width:221px"><col style="width:221px"><col style="width:221px"><col style="width:222px"></colgroup>
                <thead>
                  <tr>
                    <th><div class="d-flex align-items-center"><span class="check-box" style="margin-right:24px"></span>Contact name<svg class="ico sort-ico" width="10" height="16" stroke-width="1.100"><use href="#i-sort"/></svg></div></th>
                    <th><div class="d-flex align-items-center">Phone<svg class="ico sort-ico" width="10" height="16" stroke-width="1.100"><use href="#i-sort"/></svg></div></th>
                    <th><div class="d-flex align-items-center">Email<svg class="ico sort-ico" width="10" height="16" stroke-width="1.100"><use href="#i-sort"/></svg></div></th>
                    <th><div class="d-flex align-items-center">Business name<svg class="ico sort-ico" width="10" height="16" stroke-width="1.100"><use href="#i-sort"/></svg></div></th>
                    <th><div class="d-flex align-items-center">Created (EDT)<svg class="ico sort-ico" width="10" height="16" stroke-width="1.100"><use href="#i-sort"/></svg></div></th>
                    <th><div class="d-flex align-items-center">Last activity (EDT)<svg class="ico sort-ico" width="10" height="16" stroke-width="1.100"><use href="#i-sort"/></svg></div></th>
                    <th>Tags</th>
                  </tr>
                </thead>
                <tbody id="contactRows"></tbody>
              </table>
            </div>
            <div class="vert-track"><span class="arrow-up" style="left:3px;top:4px"></span><div class="vert-thumb"></div><span class="arrow-dn" style="left:3px;bottom:6px"></span></div>
            <div class="horiz-track"><span class="arrow-lf" style="left:3px;top:3px"></span><div class="horiz-thumb"></div><span class="arrow-rt" style="right:19px;top:3px"></span></div>
            <div class="foot-bar d-flex align-items-center">
              <span>Page 1 of 6550</span>
              <div class="page-btn d-flex align-items-center justify-content-center ms-auto" style="width:69px;gap:12px">20 <svg class="ico" width="11" height="11" viewBox="0 0 14 14" stroke-width="1.500"><path d="M2 4.500L7 9.500l5-5"/></svg></div>
              <div class="page-btn d-flex align-items-center justify-content-center" style="width:64px;margin-left:8px;color:#a3acb8;background:#fbfcfc">Prev</div>
              <div class="page-btn d-flex align-items-center justify-content-center" style="width:32px;margin-left:8px;border-color:#4b8fce;color:#2e73c4;border-radius:3px">1</div>
              <div class="page-btn d-flex align-items-center justify-content-center" style="width:61px;margin-left:10px">Next</div>
            </div>
          </div>
        </section>
      </main>
    </div>
  </div>
  <svg class="mouse-pos" width="12" height="20" viewBox="0 0 12 20" fill="none" stroke="#222" stroke-width="1.300"><path d="M2 1.500h2.500L6 3l1.500-1.500H10M6 3v14M2 18.500h2.500L6 17l1.500 1.500H10"/></svg>

  <script>
    // bookmarks bar
    const bookmarks = [
      ['folder', 'Herramientas', 141], ['funnel', 'Instituto de Negocios', 252], ['fb', 'Facebook', 404],
      ['hot', 'Hotmart', 492], ['yt', 'YouTube', 576], ['cross', 'Enlaces De Herrami...', 660],
      ['exc', 'Excalidraw', 815], ['globe', 'Checklist Integracio...', 909], ['gt', 'Traductor de Google', 1062],
      ['pp', 'Ventas por Internet...', 1212], ['funnel', 'Instituto de Negocios', 1362], ['globe', 'Loops Funnels Supp...', 1516]
    ];
    const favs = {
      folder: '<svg class="ico" width="16" height="16" style="color:#d9c9ea" stroke-width="1.100"><use href="#i-folder"/></svg>',
      funnel: '<svg width="16" height="16"><use href="#i-funnel"/></svg>',
      globe: '<svg width="16" height="16"><use href="#i-globe"/></svg>',
      fb: '<svg width="16" height="16" viewBox="0 0 16 16"><circle cx="8" cy="8" r="8" fill="#1877f2"/><path d="M9 16v-6h2l.4-2.500H9V6c0-.8.3-1.200 1.200-1.200h1.300V2.600C11 2.500 10.300 2.400 9.700 2.400 7.700 2.400 6.500 3.600 6.500 5.700v1.800H4.400V10h2.100v6z" fill="#fff"/></svg>',
      hot: '<svg width="14" height="16" viewBox="0 0 14 16"><path d="M7 0c1 3 6 5 6 10a6 6 0 0 1-12 0c0-3 2-4 3-6 1 1 1 2 1.500 2C6.500 4 6.500 2 7 0z" fill="#e8552d"/><circle cx="7" cy="10.500" r="2.500" fill="#500a98"/></svg>',
      yt: '<svg width="16" height="16" viewBox="0 0 16 16"><rect y="2" width="16" height="12" rx="3.500" fill="#e8174b"/><path d="M6.500 5.500l4 2.500-4 2.500z" fill="#fff"/></svg>',
      cross: '<svg width="14" height="16" viewBox="0 0 14 16"><rect width="14" height="16" rx="1" fill="#129b5a"/><path d="M7 3v11M3 6.500h8" stroke="#fff" stroke-width="1.600"/></svg>',
      exc: '<svg width="16" height="16" viewBox="0 0 16 16"><rect width="16" height="16" rx="3" fill="#dde0f8"/><path d="M3 3l10 10M13 3L3 13" stroke="#6965db" stroke-width="2.500"/></svg>',
      gt: '<svg width="16" height="16" viewBox="0 0 16 16"><rect width="10" height="12" rx="1" fill="#4285f4"/><rect x="6" y="4" width="10" height="12" rx="1" fill="#dfe3ea"/><text x="4.500" y="8.500" font-size="7" text-anchor="middle" fill="#fff" font-family="Roboto, sans-serif">G</text></svg>',
      pp: '<svg width="12" height="16" viewBox="0 0 12 16"><path d="M3 0h5c3 0 4 2 3.500 4.500C11 7 9 8 7 8H5l-1 6H1z" fill="#2790c3"/><path d="M4 3h4c2 0 3 1.500 2.500 3.500S8 10 6 10H5l-1 6H2z" fill="#fff" opacity=".85"/></svg>'
    };
    const bar = document.getElementById('bookmarkBar');
    bar.innerHTML = '<span class="bm-pill d-flex align-items-center">Slack</span><span class="bm-pill d-flex align-items-center ms-3">IN</span>' +
      '<svg class="ico ms-3 flex-none" width="15" height="15" viewBox="0 0 15 15" stroke-width="1.500"><rect x="1" y="1" width="5" height="5" rx="1"/><rect x="9" y="1" width="5" height="5" rx="1"/><rect x="1" y="9" width="5" height="5" rx="1"/><rect x="9" y="9" width="5" height="5" rx="1"/></svg>' +
      '<span class="bm-sep ms-3"></span>';
    bookmarks.forEach(function (b) {
      const el = document.createElement('div');
      el.className = 'bm-item d-flex align-items-center';
      el.innerHTML = favs[b[0]] + '<span>' + b[1] + '</span>';
      bar.appendChild(el);
      // favicons sit at their own spots in the bar, the gaps aren't even
      const cur = el.getBoundingClientRect().left - bar.getBoundingClientRect().left;
      el.style.marginLeft = (b[2] - cur) + 'px';
    });
    bar.insertAdjacentHTML('beforeend', '<div class="bm-right d-flex align-items-center"><span style="font-size:15px">»</span><span class="bm-sep"></span><div class="bm-item d-flex align-items-center">' + favs.folder + '<span>Todos los favoritos</span></div></div>');

    // table rows
    const VIO = 'la formula - vió vsl ...', REG = 'la formula - registro...';
    const contacts = [
      ['Antony', 'A', '#b9e6fe', '(970) 904-0191', '', 'Aug 27, 2026 12:42 PM', 'chat', '2 hours ago', '', ''],
      ['Gabriela Fabela', 'GF', '#c7f08e', '(702) 717-4039', 'gabyfvl@yahoo.com', 'Aug 26, 2026 10:54 PM', 'chat', '8 hours ago', REG, '+1'],
      ['Liliana Roncancio', 'LR', '#99f6e0', '(305) 360-5816', 'lilianaroncancio2013@gmail.com', 'Aug 26, 2026 09:06 PM', 'chat', '10 hours ago', VIO, '+1'],
      ['Flo', 'F', '#d9d6fe', '(915) 346-4799', 'falba@hotmail.com', 'Aug 26, 2026 08:57 PM', 'chat', '26 minutes ago', VIO, '+1'],
      ['Gustavo Silva', 'GS', '#b2ccff', '(407) 936-5981', 'gustavoantoniosilva@gmail.com', 'Aug 26, 2026 08:04 PM', 'chat', '11 hours ago', VIO, '+1'],
      ['Norma De Guerrero', 'ND', '#d9d6fe', '(786) 306-9692', 'normarealestate@yahoo.com', 'Aug 26, 2026 08:02 PM', 'mail', '11 hours ago', VIO, '+1'],
      ['Claudia Meza Corral', 'CM', '#b2ddff', '(346) 413-9896', 'sand62450@icloud.com', 'Aug 26, 2026 04:20 PM', 'mail', '22 hours ago', VIO, '+2'],
      ['Jaime Carrión', 'JC', '#d9d6fe', '(562) 587-4397', 'carrion.working@yahoo.com', 'Aug 26, 2026 02:04 PM', 'mail', '5 minutes ago', VIO, '+2'],
      ['Yuleixis Mendez', 'YM', '#fecdd6', '(305) 746-5886', 'yulemendez@yahoo.com', 'Aug 26, 2026 12:32 PM', 'phone', '32 minutes ago', VIO, '+1'],
      ['Eddie Vivas', 'EV', '#99f6e0', '(305) 340-3306', 'photora@hotmail.com', 'Aug 26, 2026 11:04 AM', 'phone', '31 minutes ago', VIO, '+1'],
      ['Ana Maria Smith', 'AM', '#fed7aa', '(305) 287-4598', 'amsc2005@gmail.com', 'Aug 26, 2026 10:39 AM', 'chat', '20 hours ago', VIO, '+1'],
      ['Carlos Adarmes', 'CA', '#99f6e0', '(786) 450-7934', 'carlos.trueresltor@gmail.com', 'Aug 26, 2026 07:15 AM', 'chat', '3 minutes ago', REG, '+1'],
      ['Liz Rodri', 'LR', '#b2ccff', '(254) 526-3879', '212lu96589@gmail.com', 'Aug 26, 2026 05:43 AM', 'phone', '28 minutes ago', REG, '']
    ];
    const ic = (name, w) => '<svg class="ico cell-ico" width="' + w + '" height="' + w + '" stroke-width="1.600"><use href="#i-' + name + '"/></svg>';
    document.getElementById('contactRows').innerHTML = contacts.map(function (c) {
      const mail = c[4] ? '<div class="d-flex align-items-center gap-1">' + ic('mail', 15) + '<span>' + c[4] + '</span></div>' : '';
      const tag = c[8] ? '<div class="tag-wrap d-flex align-items-center"><span class="tag-pill">' + c[8] + '</span>' + (c[9] ? '<span class="plus-pill">' + c[9] + '</span>' : '') + '</div>' : '';
      return '<tr' + (c[0] === 'Jaime Carrión' ? ' class="hov"' : '') + '>' +
        '<td><div class="d-flex align-items-center"><span class="check-box" style="margin-right:12px"></span><span class="avatar d-flex align-items-center justify-content-center" style="background:' + c[2] + '">' + c[1] + '</span><span class="name-text">' + c[0] + '</span></div></td>' +
        '<td><div class="d-flex align-items-center gap-1">' + ic('phone', 15) + '<span>' + c[3] + '</span></div></td>' +
        '<td>' + mail + '</td><td></td>' +
        '<td class="created-cell">' + c[5] + '</td>' +
        '<td><div class="d-flex align-items-center" style="gap:3px">' + ic(c[6], 16) + '<span>' + c[7] + '</span></div></td>' +
        '<td>' + tag + '</td></tr>';
    }).join('');
  </script>
  <script src="https://cdn.jsdelivr.net/npm/bootstrap@5.3.2/dist/js/bootstrap.bundle.min.js"></script>
</body>
</html>
